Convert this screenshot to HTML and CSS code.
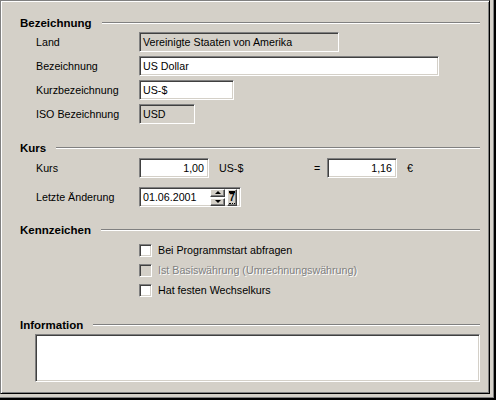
FILE: index.html
```html
<!DOCTYPE html>
<html lang="de">
<head>
<meta charset="utf-8">
<title>Währung</title>
<link rel="stylesheet" href="styles.css">
</head>
<body>
<div class="screen">
  <div class="window">
    <div class="heading h-first"><span class="htext">Bezeichnung</span><span class="hline"></span></div>
    <div class="rows rows-bez">
      <div class="row"><span class="label">Land</span><div class="field ro w-land">Vereinigte Staaten von Amerika</div></div>
      <div class="row"><span class="label">Bezeichnung</span><div class="field w-bez">US Dollar</div></div>
      <div class="row"><span class="label">Kurzbezeichnung</span><div class="field w-kurz">US-$</div></div>
      <div class="row"><span class="label">ISO Bezeichnung</span><div class="field ro w-iso">USD</div></div>
    </div>

    <div class="heading h-kurs"><span class="htext">Kurs</span><span class="hline"></span></div>
    <div class="rows rows-kurs">
      <div class="row">
        <span class="label">Kurs</span>
        <div class="field num w-kurs">1,00</div>
        <span class="unit">US-$</span>
        <span class="eq">=</span>
        <div class="field num w-kurs">1,16</div>
        <span class="unit euro">€</span>
      </div>
      <div class="row">
        <span class="label">Letzte Änderung</span>
        <div class="field w-date">
          <span class="datetext">01.06.2001</span>
          <span class="spin">
            <span class="spinbtn"><span class="tri up"></span></span>
            <span class="spinbtn"><span class="tri down"></span></span>
          </span>
          <span class="calbtn"><span class="cal7">7</span></span>
        </div>
      </div>
    </div>

    <div class="heading h-kenn"><span class="htext">Kennzeichen</span><span class="hline"></span></div>
    <div class="checks">
      <div class="check"><span class="box"></span><span class="ctext">Bei Programmstart abfragen</span></div>
      <div class="check disabled"><span class="box"></span><span class="ctext">Ist Basiswährung (Umrechnungswährung)</span></div>
      <div class="check"><span class="box"></span><span class="ctext">Hat festen Wechselkurs</span></div>
    </div>

    <div class="heading h-info"><span class="htext">Information</span><span class="hline"></span></div>
    <div class="memo"></div>
  </div>
</div>
</body>
</html>
```

FILE: styles.css
```css
* { box-sizing: border-box; }

html, body {
  margin: 0;
  padding: 0;
  background: #d4d0c8;
}

body {
  font-family: "Liberation Sans", Arial, sans-serif;
  font-size: 10.7px;
  color: #000;
}

.screen {
  width: 496px;
  height: 400px;
  padding: 0 2px 2px 0;
  border-right: 2px solid #000;
  border-bottom: 2px solid #000;
  box-shadow: inset -1px -1px #808080;
  overflow: hidden;
}

.window {
  width: 490px;
  height: 394px;
  background: #d4d0c8;
  border-top: 1px solid #808080;
  border-left: 1px solid #808080;
  border-right: 1px solid #000;
  border-bottom: 1px solid #000;
  box-shadow: inset 1px 1px #fff, inset -1px -1px #808080;
  padding: 0 9px 0 19px;
}

.heading {
  display: flex;
  align-items: center;
  height: 14px;
}
.htext {
  font-weight: bold;
  font-size: 11.5px;
  line-height: 14px;
}
.hline {
  flex: 1;
  height: 2px;
  margin-left: 10px;
  border-top: 1px solid #808080;
  border-bottom: 1px solid #fff;
}

.h-first { margin-top: 15px; }
.h-kurs { margin-top: 17px; }
.h-kenn { margin-top: 16px; }
.h-info { margin-top: 17px; }

.rows {
  display: flex;
  flex-direction: column;
  padding-left: 16px;
}
.rows-bez { margin-top: 2px; gap: 4px; }
.rows-kurs { margin-top: 3px; gap: 9px; }

.row {
  display: flex;
  align-items: center;
  height: 20px;
}

.label {
  width: 103px;
  flex: none;
}

.field {
  height: 20px;
  background: #fff;
  border: 1px solid;
  border-color: #808080 #fff #fff #808080;
  box-shadow: inset 1px 1px #404040, inset -1px -1px #d4d0c8;
  padding: 0 2px 0 3px;
  display: flex;
  align-items: center;
  white-space: nowrap;
  overflow: hidden;
  flex: none;
}
.field.ro { background: #d4d0c8; }
.field.num { justify-content: flex-end; padding-right: 4px; }

.w-land { width: 200px; }
.w-bez { width: 300px; }
.w-kurz { width: 95px; }
.w-iso { width: 56px; }
.w-kurs { width: 70px; }
.w-date { width: 102px; padding-right: 0; }

.unit { margin-left: 10px; width: 95px; flex: none; }
.unit.euro { margin-left: 10px; width: auto; }
.eq { width: 13px; flex: none; }

.datetext { width: 67px; flex: none; }

.spin {
  display: flex;
  flex-direction: column;
  gap: 1px;
  width: 15px;
  flex: none;
}
.spinbtn {
  height: 8px;
  background: #d4d0c8;
  border: 1px solid;
  border-color: #fff #404040 #404040 #fff;
  box-shadow: inset -1px -1px #808080;
  display: flex;
  align-items: center;
  justify-content: center;
}
.tri {
  width: 0;
  height: 0;
  border-left: 3px solid transparent;
  border-right: 3px solid transparent;
}
.tri.up { border-bottom: 3px solid #000; }
.tri.down { border-top: 3px solid #000; }

.calbtn {
  margin-left: 2px;
  width: 10px;
  height: 17px;
  background: #d4d0c8;
  border: 1px solid;
  border-color: #fff #404040 #404040 #fff;
  box-shadow: inset -1px -1px #808080;
  display: flex;
  justify-content: center;
  flex: none;
}
.cal7 {
  margin-top: 1px;
  font-weight: bold;
  font-size: 10px;
  line-height: 9px;
  height: 13px;
  width: 6px;
  text-align: center;
  border-top: 2px solid #000;
  border-bottom: 1px dotted #000;
}

.checks {
  margin-top: 4px;
  padding-left: 119px;
  display: flex;
  flex-direction: column;
}
.check {
  height: 20px;
  display: flex;
  align-items: flex-start;
}
.box {
  margin-top: 3px;
  width: 13px;
  height: 13px;
  background: #fff;
  border: 1px solid;
  border-color: #808080 #fff #fff #808080;
  box-shadow: inset 1px 1px #404040, inset -1px -1px #d4d0c8;
  flex: none;
}
.ctext {
  margin-left: 6px;
  line-height: 20px;
  margin-top: -1px;
}
.check.disabled .box { background: #d4d0c8; }
.check.disabled .ctext {
  color: #808080;
  text-shadow: 1px 1px 0 #fff;
}

.memo {
  margin-top: 2px;
  margin-left: 15px;
  height: 48px;
  background: #fff;
  border: 1px solid;
  border-color: #808080 #fff #fff #808080;
  box-shadow: inset 1px 1px #404040, inset -1px -1px #d4d0c8;
}
```
